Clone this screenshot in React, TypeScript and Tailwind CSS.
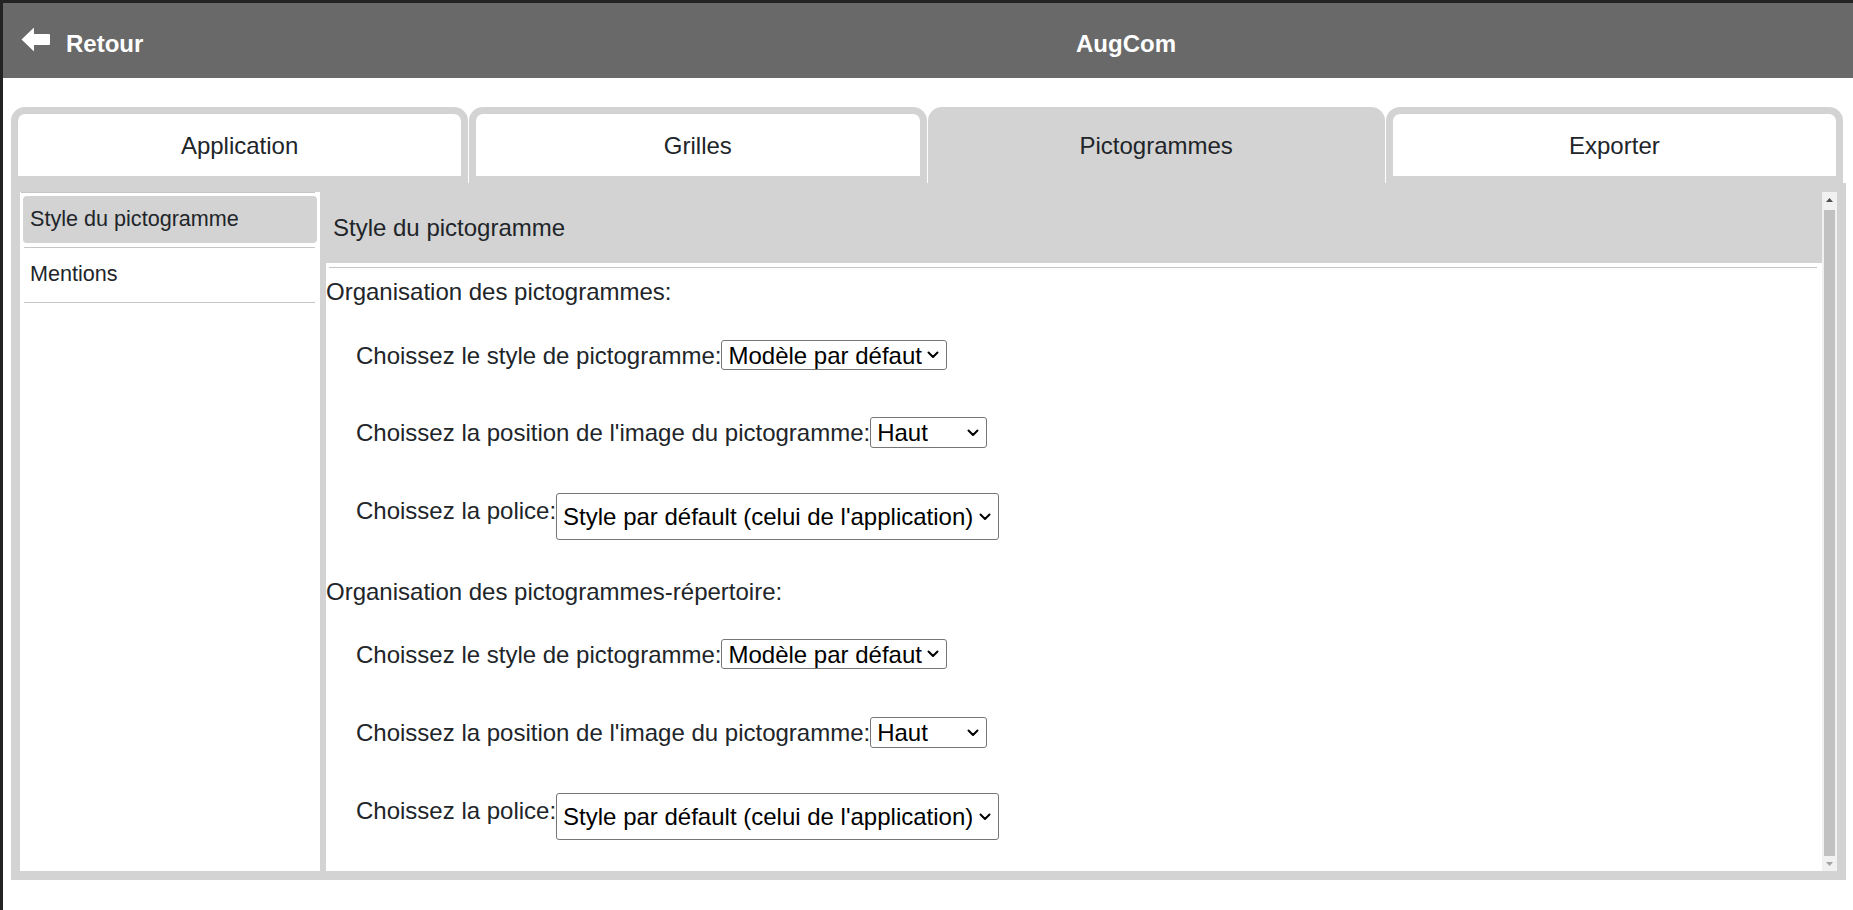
import { useState } from "react";

const tabs = ["Application", "Grilles", "Pictogrammes", "Exporter"];

function Row({ label, value, options, selectClass, labelClass }: { label: string; value: string; options: string[]; selectClass: string; labelClass: string }) {
  const [val, setVal] = useState(value);
  return (
    <div className="flex items-start pl-[30px]">
      <label className={"leading-[27.6px] text-[#212529] " + labelClass}>{label}</label>
      <div className="relative flex">
        <select
          value={val}
          onChange={(e: any) => setVal(e.target.value)}
          className={"block appearance-none border border-[#767676] rounded-[3px] bg-white text-black leading-[27px] pl-[6px] " + selectClass}
        >
          {options.map((o) => (
            <option key={o}>{o}</option>
          ))}
        </select>
        <svg width="12" height="8" viewBox="0 0 12 8" className="absolute right-[8px] top-1/2 -translate-y-1/2 pointer-events-none">
          <path d="M1.5 1.5 L6 6 L10.5 1.5" fill="none" stroke="#000" strokeWidth="2" strokeLinecap="round" strokeLinejoin="round" />
        </svg>
      </div>
    </div>
  );
}

function Group({ title, first }: { title: string; first: boolean }) {
  return (
    <div>
      <div className={"leading-[28px] text-[#212529] " + (first ? "mt-[10px]" : "mt-[38px]")}>{title}</div>
      <div className={first ? "mt-[34px]" : "mt-[33px]"}>
        <Row
          label="Choissez le style de pictogramme:"
          value="Modèle par défaut"
          options={["Modèle par défaut", "Modèle encadré"]}
          selectClass="h-[30px] w-[226px]"
          labelClass="mt-[2px]"
        />
      </div>
      <div className={first ? "mt-[47px]" : "mt-[48px]"}>
        <Row
          label="Choissez la position de l'image du pictogramme:"
          value="Haut"
          options={["Haut", "Bas", "Gauche", "Droite"]}
          selectClass="h-[31px] w-[117px]"
          labelClass="mt-[2px]"
        />
      </div>
      <div className="mt-[45px]">
        <Row
          label="Choissez la police:"
          value="Style par défault (celui de l'application)"
          options={["Style par défault (celui de l'application)", "Arial", "Verdana"]}
          selectClass="h-[47px] w-[443px]"
          labelClass="mt-[4px]"
        />
      </div>
    </div>
  );
}

export default function App() {
  const [active, setActive] = useState(2);
  const [section, setSection] = useState(0);

  return (
    <div className="h-screen w-full overflow-hidden bg-white border-l-[3px] border-t-[3px] border-[#232323] font-['Liberation_Sans',Arial,sans-serif] text-[24px]">
      {/* top bar */}
      <div className="h-[75px] bg-[#696969] flex items-start text-white font-bold">
        <div className="w-[396px] flex items-start pl-[18px]">
          <svg width="30" height="25" viewBox="0 0 30 25" className="mt-[24px]">
            <path d="M0.5 12.5 L12.5 1 Q13 0.5 13 1.5 L13 7 L28 7 Q29 7 29 8 L29 17 Q29 18 28 18 L13 18 L13 23.5 Q13 24.5 12.5 24 Z" fill="#ffffff" />
          </svg>
          <span className="ml-[15px] mt-[27px] leading-[27.6px]">Retour</span>
        </div>
        <div className="flex-1 text-center mt-[27px] leading-[27.6px]">AugCom</div>
      </div>

      {/* tabs */}
      <div className="mt-[29px] ml-[8px] mr-[10px] flex gap-px">
        {tabs.map((t, i) => (
          <button
            key={t}
            onClick={() => setActive(i)}
            className={
              "flex-1 h-[76px] border-[7px] border-[#d3d3d3] rounded-t-[14px] flex items-center justify-center pt-[2px] text-[#212529] " +
              (i === active ? "bg-[#d3d3d3]" : "bg-white")
            }
          >
            {t}
          </button>
        ))}
      </div>

      {/* panel */}
      <div className="ml-[8px] mr-[7px] h-[697px] bg-[#d3d3d3] p-[9px] flex gap-[6px]">
        <div className="w-[300px] bg-white text-[21.6px] text-[#212529]">
          <div className="h-px bg-[#c6c6c6] ml-[1px] mr-[5px]" />
          {["Style du pictogramme", "Mentions"].map((s, i) => (
            <div key={s}>
              <div
                onClick={() => setSection(i)}
                className={
                  "mt-[3px] mx-[3px] h-[47px] rounded-[4px] pl-[7px] flex items-center cursor-pointer " +
                  (section === i ? "bg-[#d3d3d3]" : "")
                }
              >
                {s}
              </div>
              <div className="mt-[4px] h-px bg-[#c6c6c6] ml-[4px] mr-[5px]" />
            </div>
          ))}
        </div>

        <div className="flex-1 flex">
          <div className="flex-1 overflow-hidden">
            <div className="h-[71px] bg-[#d3d3d3] flex items-center pl-[7px] text-[#212529]">Style du pictogramme</div>
            <div className="bg-white h-full">
              <div className="pt-[4px]">
                <div className="h-px bg-[#c6c6c6] ml-[3px] mr-[5px]" />
              </div>
              <Group title="Organisation des pictogrammes:" first={true} />
              <Group title="Organisation des pictogrammes-répertoire:" first={false} />
            </div>
          </div>
          {/* scrollbar */}
          <div className="w-[15px] bg-[#f1f1f1] flex flex-col">
            <div className="h-[15px] flex items-center justify-center">
              <svg width="7" height="4" viewBox="0 0 7 4">
                <path d="M0 4 L3.5 0 L7 4 Z" fill="#505050" />
              </svg>
            </div>
            <div className="flex-1 mt-[3px] mx-[2px] bg-[#c1c1c1]" />
            <div className="h-[15px] flex items-center justify-center">
              <svg width="7" height="4" viewBox="0 0 7 4">
                <path d="M0 0 L3.5 4 L7 0 Z" fill="#a3a3a3" />
              </svg>
            </div>
          </div>
        </div>
      </div>
    </div>
  );
}
